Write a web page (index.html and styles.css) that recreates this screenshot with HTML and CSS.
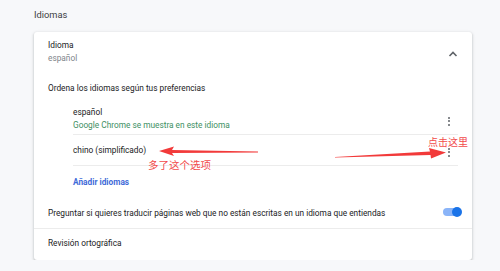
FILE: index.html
```html
<!DOCTYPE html>
<html>
<head>
	<title>Idiomas</title>
	<link rel="stylesheet" href="styles.css">
</head>
<body>
	<div class="page">
		<h1 class="section-title">Idiomas</h1>
		<div class="card">
			<div class="lang-head">
				<div>
					<div class="label">Idioma</div>
					<div class="sub">español</div>
				</div>
				<svg class="chevron" width="10" height="8" viewBox="0 0 10 8"><path d="M1.5 6 L5 2.5 L8.5 6" fill="none" stroke="#5f6368" stroke-width="1.6"/></svg>
			</div>
			<div class="order-text">Ordena los idiomas según tus preferencias</div>
			<ul class="lang-list">
				<li class="lang-item first">
					<div>
						<div class="label">español</div>
						<div class="note">Google Chrome se muestra en este idioma</div>
					</div>
					<span class="kebab"><i></i><i></i><i></i></span>
				</li>
				<li class="lang-item second">
					<div class="label">chino (simplificado)</div>
					<span class="kebab"><i></i><i></i><i></i></span>
				</li>
			</ul>
			<div class="add-link">Añadir idiomas</div>
			<div class="row bordered">
				<span>Preguntar si quieres traducir páginas web que no están escritas en un idioma que entiendas</span>
				<span class="toggle"><span class="knob"></span></span>
			</div>
			<div class="row last">Revisión ortográfica</div>
		</div>
	</div>

	<!-- annotations drawn on the screenshot -->
	<svg class="marks" width="500" height="271" viewBox="0 0 500 271">
		<polygon points="159,151 174,146.5 172,150 258,151.5 258,152.5 172,153 174,156" fill="#f23a3a"/>
		<polygon points="335,157 430,151.5 429,148 446,152.5 431,158.5 430.5,155 335,157.6" fill="#f23a3a"/>
	</svg>
	<span class="note-red one">多了这个选项</span>
	<span class="note-red two">点击这里</span>
</body>
</html>
```

FILE: styles.css
```css
body {
	margin: 0;
	background-color: #f7f8fa;
	font-family: Roboto, "Liberation Sans", sans-serif;
	font-size: 8.3px;
	color: #202124;
}
.page {
	padding-left: 34px;
}
.section-title {
	margin: 7px 0 9px;
	font-size: 9.3px;
	font-weight: normal;
	line-height: 16px;
	color: #3c4043;
}
.card {
	width: 438px;
	background-color: #fff;
	border-radius: 3px;
	box-shadow: 0 1px 2px rgba(60, 64, 67, 0.25), 0 1px 3px 1px rgba(60, 64, 67, 0.1);
}
.label {
	line-height: 13px;
}
.sub {
	line-height: 13px;
	color: #80868b;
}
.lang-head {
	display: flex;
	justify-content: space-between;
	align-items: center;
	padding: 7px 14px 0;
}
.chevron {
	margin-top: 3px;
}
.order-text {
	margin-top: 17px;
	padding-left: 14px;
	line-height: 13px;
}
.lang-list {
	list-style: none;
	margin: 9px 14px 0 39px;
	padding: 0;
}
.lang-item {
	display: flex;
	justify-content: space-between;
	align-items: center;
	padding-right: 8px;
	border-bottom: 1px solid #ececec;
}
.lang-item.first {
	padding-top: 2px;
	padding-bottom: 2px;
}
.lang-item.second {
	height: 30px;
}
.note {
	line-height: 13px;
	color: #3d8f63;
}
.kebab {
	display: flex;
	flex-direction: column;
	gap: 1.5px;
	margin-top: 4px;
}
.kebab i {
	width: 2px;
	height: 2px;
	border-radius: 50%;
	background-color: #5f6368;
}
.add-link {
	padding-left: 39px;
	line-height: 32px;
	font-weight: bold;
	color: #3f6bd8;
}
.row {
	display: flex;
	justify-content: space-between;
	align-items: center;
	padding: 0 12px 0 14px;
	height: 30px;
}
.row.bordered {
	border-bottom: 1px solid #ececec;
}
.row.last {
	height: 28px;
	padding-bottom: 3px;
}
.toggle {
	position: relative;
	width: 17px;
	height: 8px;
	border-radius: 4px;
	background-color: #8ab4f8;
	margin-top: -2px;
}
.toggle .knob {
	position: absolute;
	right: -2px;
	top: -1px;
	width: 10px;
	height: 10px;
	border-radius: 50%;
	background-color: #1a73e8;
}
.marks {
	position: absolute;
	left: 0;
	top: 0;
}
.note-red {
	position: absolute;
	font-family: "Noto Sans CJK SC", serif;
	font-size: 10.5px;
	line-height: 14px;
	color: #f24b4b;
}
.note-red.one {
	left: 148px;
	top: 158px;
}
.note-red.two {
	left: 428px;
	top: 135px;
	font-size: 10px;
}
```
